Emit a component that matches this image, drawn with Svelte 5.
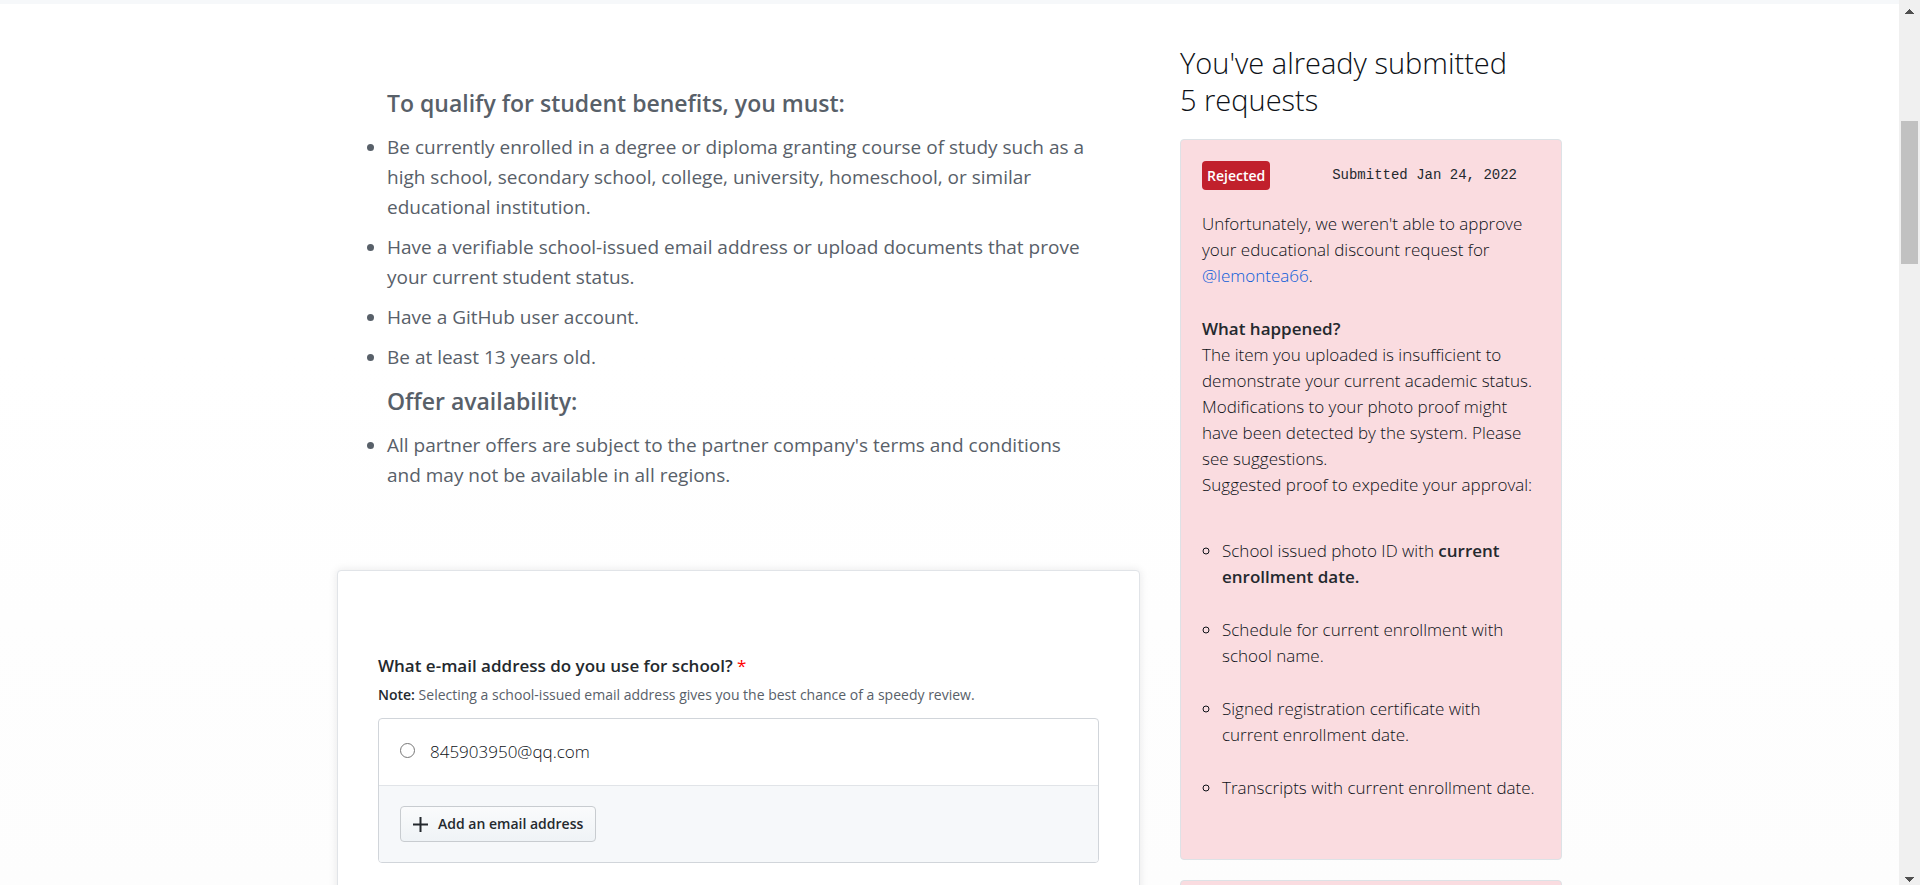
<script>
  const rules = [
    'Be currently enrolled in a degree or diploma granting course of study such as a high school, secondary school, college, university, homeschool, or similar educational institution.',
    'Have a verifiable school-issued email address or upload documents that prove your current student status.',
    'Have a GitHub user account.',
    'Be at least 13 years old.'
  ];
  let chosen = $state('');
</script>

<div class="viewport">
  <div class="page">
    <div class="band"></div>
    <div class="columns">
      <main>
        <section class="terms">
          <h2>To qualify for student benefits, you must:</h2>
          <ul>
            {#each rules as rule}
              <li>{rule}</li>
            {/each}
          </ul>
          <h2>Offer availability:</h2>
          <ul>
            <li>All partner offers are subject to the partner company's terms and conditions and may not be available in all regions.</li>
          </ul>
        </section>

        <form class="panel">
          <fieldset>
            <legend>What e-mail address do you use for school? <span class="required">*</span></legend>
            <p class="note"><strong>Note:</strong> Selecting a school-issued email address gives you the best chance of a speedy review.</p>
            <div class="box">
              <div class="choice">
                <input id="email-0" type="radio" name="email" value="845903950@qq.com" bind:group={chosen} />
                <label for="email-0">845903950@qq.com</label>
              </div>
              <div class="add">
                <button type="button">
                  <svg width="15" height="15" viewBox="0 0 15 15" aria-hidden="true"><path d="M6.5 0h2v6.5H15v2H8.5V15h-2V8.5H0v-2h6.5z" fill="#24292e" /></svg>
                  Add an email address
                </button>
              </div>
            </div>
          </fieldset>
        </form>
      </main>

      <aside>
        <h1>You've already submitted 5&nbsp;requests</h1>
        <article class="request">
          <header>
            <span class="badge">Rejected</span>
            <span class="date">Submitted Jan 24, 2022</span>
          </header>
          <p>Unfortunately, we weren't able to approve your educational discount request for <a href="#lemontea66">@lemontea66</a>.</p>
          <h3>What happened?</h3>
          <p>The item you uploaded is insufficient to demonstrate your current academic status. Modifications to your photo proof might have been detected by the system. Please see suggestions.</p>
          <p>Suggested proof to expedite your approval:</p>
          <ul>
            <li>School issued photo ID with <strong>current enrollment date.</strong></li>
            <li>Schedule for current enrollment with school name.</li>
            <li>Signed registration certificate with current enrollment date.</li>
            <li>Transcripts with current enrollment date.</li>
          </ul>
        </article>
        <article class="request"></article>
      </aside>
    </div>
  </div>

  <div class="scrollbar" aria-hidden="true">
    <svg width="9" height="5" viewBox="0 0 9 5" shape-rendering="crispEdges"><path d="M0 5V4h1V3h1V2h1V1h1V0h1v1h1v1h1v1h1v1h1v1z" fill="#505050" /></svg>
    <div class="thumb"></div>
    <svg class="down" width="9" height="5" viewBox="0 0 9 5" shape-rendering="crispEdges"><path d="M0 0v1h1v1h1v1h1v1h1v1h1V4h1V3h1V2h1V1h1V0z" fill="#505050" /></svg>
  </div>
</div>

<style>
  :global(body) {
    background: #fff;
    overflow: hidden;
  }
  h1, h2, h3, p, ul, fieldset, legend {
    margin: 0;
    padding: 0;
    border: 0;
  }
  .viewport {
    display: flex;
    height: 100vh;
    overflow: hidden;
    font-family: "Open Sans", "Noto Sans", sans-serif;
    font-size: 17px;
    color: #24292e;
  }
  .page {
    flex: 1;
    min-width: 0;
    background: linear-gradient(#fff 40%, #fdfdfd);
  }
  .band {
    height: 4px;
    background: #f6f8fa;
  }
  .columns {
    display: grid;
    grid-template-columns: minmax(0, 803fr) minmax(0, 382fr);
    gap: 40px;
    max-width: 1225px;
    margin: 0 auto;
  }
  .terms {
    padding: 80px 50px 70px;
    font-size: 19px;
    line-height: 30px;
    color: #586069;
  }
  .terms h2 {
    font-size: 23px;
    font-weight: 600;
    line-height: 38px;
    margin-bottom: 10px;
  }
  .terms li {
    margin-bottom: 10px;
  }
  .panel {
    border: 1px solid #e1e4e8;
    border-radius: 4px;
    background: #fff;
    box-shadow: 0 0 8px rgba(27, 31, 35, 0.1);
    padding: 80px 40px;
  }
  legend {
    font-weight: 600;
    line-height: 30px;
  }
  .required {
    color: #f00;
    font-weight: 400;
  }
  .note {
    font-size: 14px;
    line-height: 28px;
    color: #586069;
    margin-bottom: 9px;
  }
  .note strong {
    color: #24292e;
    font-weight: 600;
  }
  .box {
    border: 1px solid #d1d5da;
    border-radius: 4px;
    overflow: hidden;
  }
  .choice {
    display: flex;
    align-items: center;
    gap: 15px;
    padding: 20px 21px;
    font-weight: 300;
    line-height: 26px;
    color: #0d1117;
  }
  .choice input {
    width: 15px;
    height: 15px;
    margin: 0 0 4px;
  }
  .add {
    display: flex;
    padding: 20px 21px;
    border-top: 1px solid #e1e4e8;
    background: #f6f8fa;
  }
  button {
    display: flex;
    align-items: center;
    gap: 10px;
    padding: 4px 12px;
    border: 1px solid #c8ccd0;
    border-radius: 4px;
    background: linear-gradient(#fafbfc, #eff3f6);
    font: 600 14px/26px "Open Sans", "Noto Sans", sans-serif;
    color: #24292e;
  }
  aside {
    color: #0d1117;
    font-weight: 300;
  }
  h1 {
    padding: 40px 20px 0 0;
    margin-bottom: 21px;
    font-size: 29px;
    font-weight: 300;
    line-height: 37px;
  }
  .request {
    box-sizing: border-box;
    min-height: 80px;
    margin-bottom: 20px;
    padding: 21px 20px 31px 21px;
    border: 1px solid #dde2e6;
    border-radius: 4px;
    background: #fadce0;
    line-height: 26px;
  }
  .request header {
    display: flex;
    justify-content: space-between;
    align-items: center;
    padding-right: 24px;
    margin-bottom: 21px;
  }
  .badge {
    padding: 0 5px;
    border-radius: 4px;
    background: #c1202c;
    color: #fff;
    font-size: 14px;
    font-weight: 600;
    line-height: 29px;
  }
  .date {
    color: #24292e;
    font: 14px/29px "Liberation Mono", monospace;
  }
  a {
    color: #0b5bd8;
    text-decoration: none;
  }
  h3 {
    margin-top: 27px;
    font-size: 17px;
    font-weight: 600;
    color: #24292e;
  }
  .request strong {
    font-weight: 600;
    color: #24292e;
  }
  .request ul {
    list-style: circle;
    margin-top: 40px;
    padding-left: 20px;
  }
  .request li {
    margin-bottom: 27px;
  }
  .scrollbar {
    display: flex;
    flex-direction: column;
    align-items: center;
    box-sizing: border-box;
    width: 21px;
    padding: 9px 2px 3px;
    background: #f0f0f0;
  }
  .thumb {
    width: 17px;
    height: 143px;
    margin-top: 107px;
    background: #c1c1c1;
  }
  .down {
    margin-top: auto;
  }
</style>
